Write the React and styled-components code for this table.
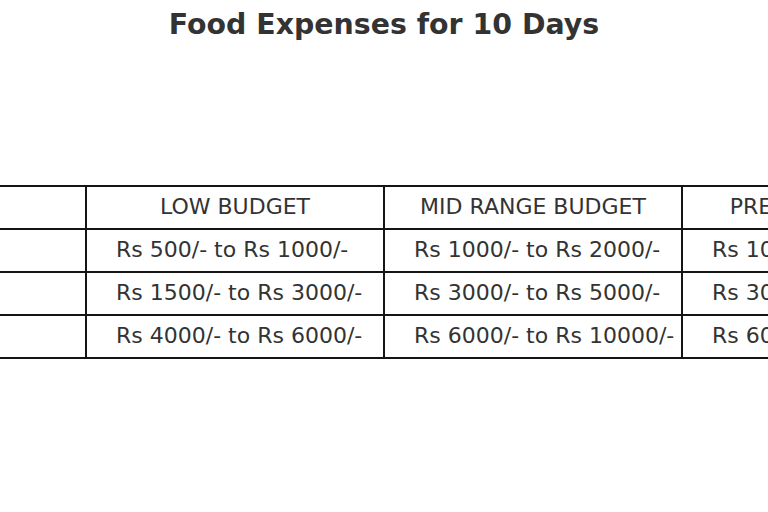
import styled, { createGlobalStyle } from "styled-components";

const GlobalStyle = createGlobalStyle`
  html, body {
    margin: 0;
    padding: 0;
    background: #ffffff;
    overflow: hidden;
  }
  body {
    font-family: "DejaVu Sans", "Liberation Sans", sans-serif;
    color: #333333;
  }
`;

const columns = ["", "LOW BUDGET", "MID RANGE BUDGET", "PREMIUM BUDGET"];

const rows = [
  ["Breakfast", "Rs 500/- to Rs 1000/-", "Rs 1000/- to Rs 2000/-", "Rs 10000/- and above"],
  ["Lunch", "Rs 1500/- to Rs 3000/-", "Rs 3000/- to Rs 5000/-", "Rs 30000/- and above"],
  ["Dinner", "Rs 4000/- to Rs 6000/-", "Rs 6000/- to Rs 10000/-", "Rs 60000/- and above"],
];

const App = () => {
  return (
    <Page>
      <GlobalStyle />
      <Title>Food Expenses for 10 Days</Title>
      <TableArea>
        <Table>
          <colgroup>
            {columns.map((c, i) => (
              <col key={i} />
            ))}
          </colgroup>
          <thead>
            <tr>
              {columns.map((c, i) => (
                <HeadCell key={i}>{c}</HeadCell>
              ))}
            </tr>
          </thead>
          <tbody>
            {rows.map((row, r) => (
              <tr key={r}>
                {row.map((cell, i) => (
                  <Cell key={i}>{cell}</Cell>
                ))}
              </tr>
            ))}
          </tbody>
        </Table>
      </TableArea>
    </Page>
  );
};

export default App;

const Page = styled.div`
  width: 768px;
  height: 512px;
  overflow: hidden;
`;

const Title = styled.h1`
  margin: 8px 0 0;
  font-size: 28.4px;
  line-height: 34px;
  font-weight: 700;
  text-align: center;
  color: #333333;
`;

const TableArea = styled.div`
  display: flex;
  justify-content: center;
  margin-top: 143px;
  width: 768px;
`;

const Table = styled.table`
  flex: none;
  width: 1192px;
  table-layout: fixed;
  border-collapse: collapse;
  col {
    width: 298px;
  }
  tr {
    height: 43px;
  }
`;

const HeadCell = styled.th`
  border: 2px solid #151515;
  padding: 0 0 3px;
  font-size: 22px;
  font-weight: 400;
  text-align: center;
  white-space: nowrap;
  color: #333333;
`;

const Cell = styled.td`
  border: 2px solid #151515;
  padding: 0 0 2px 29px;
  font-size: 22px;
  text-align: left;
  white-space: nowrap;
  color: #333333;
`;
